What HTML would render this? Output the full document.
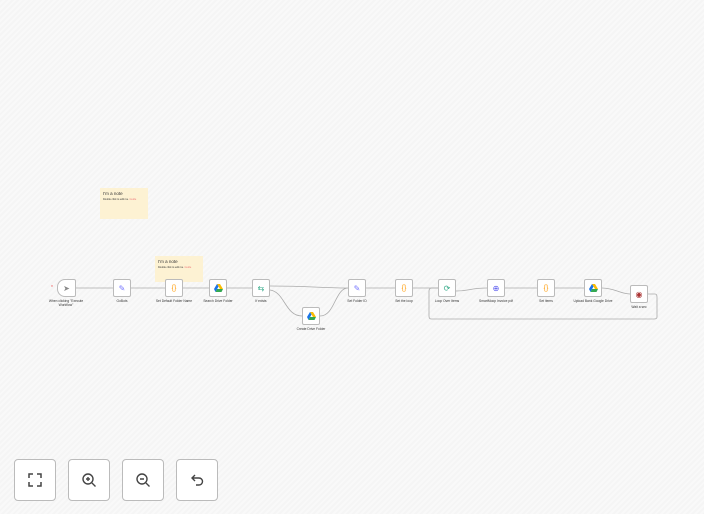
<!DOCTYPE html><html><head><style>
body{margin:0;width:704px;height:514px;overflow:hidden;background:#f7f7f7;font-family:"Liberation Sans",sans-serif;position:relative;
background-image:repeating-linear-gradient(135deg,#f5f5f5 0 2px,#f9f9f9 2px 4px);}
.n{position:absolute;width:18px;height:18px;background:#fff;border:1px solid #bbb;border-radius:2px;box-sizing:border-box;display:flex;align-items:center;justify-content:center;font-size:8px}
.l{position:absolute;font-size:3.3px;color:#333;text-align:center;width:44px;line-height:4px}
.note{position:absolute;background:#fdf2d3;}
.note b{display:block;font-weight:normal;font-size:4.5px;color:#333;margin:3px 0 0 3px}
.note i{display:block;font-style:normal;font-size:2.5px;color:#333;margin:2px 0 0 3px}
.c{position:absolute;top:459px;width:42px;height:42px;background:#fff;border:1px solid #bbb;border-radius:4px;box-sizing:border-box;display:flex;align-items:center;justify-content:center}
</style></head><body>
<div class="note" style="left:100px;top:188px;width:48px;height:31px"><b>I'm a note</b><i>Double click to edit me. <span style="color:#e77">Guide</span></i></div>
<div class="note" style="left:155px;top:256px;width:48px;height:26px"><b>I'm a note</b><i>Double click to edit me. <span style="color:#e77">Guide</span></i></div>
<svg style="position:absolute;left:0;top:0" width="704" height="514" fill="none" stroke="#aaa" stroke-width="0.8">
<path d="M76 288H113M131 288H165M183 288H209M227 288H252M366 288H395M413 288H438M505 288H537M555 288H584"/>
<path d="M270 286C310 286 320 288 348 288M270 290C285 292 285 316 302 316M320 316C335 316 335 288 348 288M456 291C470 291 470 288 487 288M602 288C615 288 620 294 630 294"/>
<path d="M648 294H655Q657 294 657 297V317Q657 319 654 319H431Q429 319 429 316V291Q429 288 432 288H438"/>
</svg>
<div class="n" style="left:57px;top:279px;width:19px;border-radius:8px 2px 2px 8px;color:#888">➤</div>
<div style="position:absolute;left:51px;top:285px;color:#e55;font-size:5px">*</div>
<div class="n" style="left:113px;top:279px;color:#77f">✎</div>
<div class="n" style="left:165px;top:279px;color:#f90;font-size:7px">{}</div>
<div class="n" style="left:209px;top:279px"><svg width="9" height="8" viewBox="0 0 9 8"><path d="M3 0h3l3 5H6z" fill="#fbbc04"/><path d="M3 0L0 5l1.5 3L4.5 2.5z" fill="#1a73e8"/><path d="M1.5 8h6L9 5H3z" fill="#34a853"/></svg></div>
<div class="n" style="left:252px;top:279px;color:#3a8">⇆</div>
<div class="n" style="left:302px;top:307px"><svg width="9" height="8" viewBox="0 0 9 8"><path d="M3 0h3l3 5H6z" fill="#fbbc04"/><path d="M3 0L0 5l1.5 3L4.5 2.5z" fill="#1a73e8"/><path d="M1.5 8h6L9 5H3z" fill="#34a853"/></svg></div>
<div class="n" style="left:348px;top:279px;color:#77f">✎</div>
<div class="n" style="left:395px;top:279px;color:#f90;font-size:7px">{}</div>
<div class="n" style="left:438px;top:279px;color:#3a8">⟳</div>
<div class="n" style="left:487px;top:279px;color:#55e">⊕</div>
<div class="n" style="left:537px;top:279px;color:#f90;font-size:7px">{}</div>
<div class="n" style="left:584px;top:279px"><svg width="9" height="8" viewBox="0 0 9 8"><path d="M3 0h3l3 5H6z" fill="#fbbc04"/><path d="M3 0L0 5l1.5 3L4.5 2.5z" fill="#1a73e8"/><path d="M1.5 8h6L9 5H3z" fill="#34a853"/></svg></div>
<div class="n" style="left:630px;top:285px;color:#a33">◉</div>
<div class="l" style="left:44px;top:299px">When clicking "Execute Workflow"</div>
<div class="l" style="left:100px;top:299px">GoBots</div>
<div class="l" style="left:152px;top:299px">Set Default Folder Name</div>
<div class="l" style="left:196px;top:299px">Search Drive Folder</div>
<div class="l" style="left:239px;top:299px">If exists</div>
<div class="l" style="left:289px;top:327px">Create Drive Folder</div>
<div class="l" style="left:335px;top:299px">Set Folder ID</div>
<div class="l" style="left:382px;top:299px">Set the loop</div>
<div class="l" style="left:425px;top:299px">Loop Over Items</div>
<div class="l" style="left:474px;top:299px">SmartMoop Invoice pdf</div>
<div class="l" style="left:524px;top:299px">Set items</div>
<div class="l" style="left:571px;top:299px">Upload Bank Google Drive</div>
<div class="l" style="left:617px;top:305px">Wait a sec</div>
<div class="c" style="left:14px"><svg width="16" height="16" fill="none" stroke="#444" stroke-width="1.5"><path d="M2 6V2h4M10 2h4v4M14 10v4h-4M6 14H2v-4"/></svg></div>
<div class="c" style="left:68px"><svg width="16" height="16" fill="none" stroke="#444" stroke-width="1.4"><circle cx="7" cy="7" r="5"/><path d="M11 11l3.5 3.5M5 7h4M7 5v4"/></svg></div>
<div class="c" style="left:122px"><svg width="16" height="16" fill="none" stroke="#444" stroke-width="1.4"><circle cx="7" cy="7" r="5"/><path d="M11 11l3.5 3.5M5 7h4"/></svg></div>
<div class="c" style="left:176px"><svg width="16" height="16" fill="none" stroke="#444" stroke-width="1.4"><path d="M6 3L3 6l3 3M3 6h7a3.5 3.5 0 010 7H7"/></svg></div>
</body></html>
